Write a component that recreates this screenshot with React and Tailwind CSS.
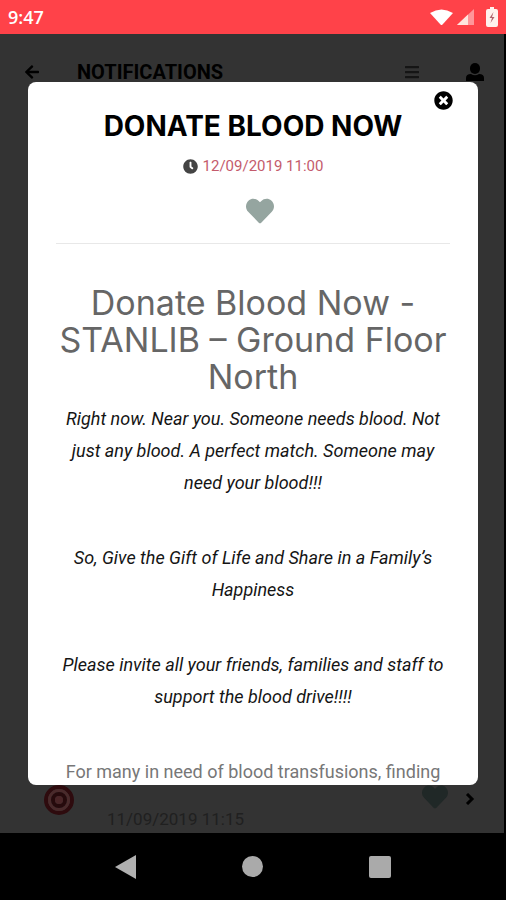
import { FaArrowLeft, FaBars, FaClock, FaHeart, FaTimesCircle } from "react-icons/fa";

const paragraphs = [
  "Right now. Near you. Someone needs blood. Not just any blood. A perfect match. Someone may need your blood!!!",
  "So, Give the Gift of Life and Share in a Family’s Happiness",
  "Please invite all your friends, families and staff to support the blood drive!!!!",
];

function StatusBar() {
  return (
    <div className="flex h-[34px] items-center justify-between bg-[#ff4249] px-2 text-white">
      <span className="text-lg font-semibold font-['Open_Sans',sans-serif]">9:47</span>
      <div className="flex items-center gap-1">
        <svg className="h-4 w-[23px]" viewBox="0 0 23 16" fill="currentColor">
          <path d="M0 4Q11.500-3 23 4L12.500 15.500Q11.500 16.500 10.500 15.500Z" />
        </svg>
        <svg className="h-4 w-[17px]" viewBox="0 0 17 16">
          <path d="M17 0V16H0Z" fill="#ff969a" />
          <path d="M11 5.600V16H0Z" fill="#ffe6df" />
        </svg>
        <svg className="ml-2 h-5 w-3" viewBox="0 0 12 20">
          <path d="M4 0H8V2H10Q12 2 12 4V18Q12 20 10 20H2Q0 20 0 18V4Q0 2 2 2H4Z" fill="#fff1ee" />
          <path d="M7.500 5L3.500 11H6L4.500 16L8.500 10H6Z" fill="#b0626c" />
        </svg>
      </div>
    </div>
  );
}

function NotificationsPage() {
  return (
    <div className="flex flex-1 flex-col border-r-2 border-black bg-[#333333] text-black">
      <header className="flex h-[75px] items-center pr-5 pl-6">
        <button aria-label="Back">
          <FaArrowLeft className="size-4" />
        </button>
        <h1 className="ml-[37px] flex-1 text-xl font-bold">NOTIFICATIONS</h1>
        <button aria-label="Menu">
          <FaBars className="size-4 text-[#151515]" />
        </button>
        <button aria-label="Profile" className="ml-[46px]">
          <svg className="size-[18px]" viewBox="0 0 18 18" fill="currentColor">
            <rect x="4" y="0" width="10" height="11" rx="5" />
            <path d="M0 18V15Q0 11 5 11Q9 13.500 13 11Q18 11 18 15V18Z" />
          </svg>
        </button>
      </header>
      <div className="mt-auto flex items-start pr-7 pl-[43px]">
        <svg className="mt-[3px] size-8" viewBox="0 0 32 32" fill="none">
          <circle cx="16" cy="16" r="13" stroke="#2e0b0e" strokeWidth="4" />
          <circle cx="16" cy="16" r="9.500" stroke="#4a2a2b" strokeWidth="3" />
          <circle cx="16" cy="16" r="6" stroke="#260a0c" strokeWidth="4" />
          <circle cx="16" cy="16" r="4" fill="#4a2527" />
        </svg>
        <p className="mt-6 ml-8 flex-1 text-[17px] leading-7 text-[#202020]">11/09/2019 11:15</p>
        <FaHeart className="mt-[3px] size-[26px] text-[#202827]" />
        <svg className="mt-3 ml-4 size-3" viewBox="0 0 12 12" fill="none" stroke="currentColor" strokeWidth="3">
          <path d="M3 1L8 6L3 11" />
        </svg>
      </div>
    </div>
  );
}

function NotificationDialog() {
  return (
    <div className="absolute inset-0 flex px-7 py-12">
      <div role="dialog" aria-labelledby="dialog-title" className="flex-1 overflow-hidden rounded-lg bg-white text-center">
        <div className="flex h-7 items-end justify-end pr-[25px]">
          <button aria-label="Close">
            <FaTimesCircle className="size-[19px] text-black" />
          </button>
        </div>
        <h2 id="dialog-title" className="text-[28px] leading-8 font-bold text-black font-['Inter',sans-serif]">
          DONATE BLOOD NOW
        </h2>
        <div className="mt-3 flex items-center justify-center gap-[5px] leading-6">
          <FaClock className="size-[15px] text-[#444444]" />
          <time className="text-[15px] text-[#c45b6c]">12/09/2019 11:00</time>
        </div>
        <button aria-label="Like" className="mt-[19px] block w-full pl-[14px]">
          <FaHeart className="mx-auto size-7 text-[#95a5a0]" />
        </button>
        <hr className="mx-7 mt-[18px] border-[#e8e8e8]" />
        <h3 className="mt-10 text-[34px] leading-[37px] text-[#666666] font-['Inter',sans-serif]">
          Donate Blood Now -
          <br />
          STANLIB – Ground Floor
          <br />
          North
        </h3>
        <div className="mt-2 flex flex-col gap-[43px] px-7 text-lg leading-8">
          {paragraphs.map((text) => (
            <p key={text} className="text-[#151515] italic">
              {text}
            </p>
          ))}
          <p className="text-[#777777]">For many in need of blood transfusions, finding</p>
        </div>
      </div>
    </div>
  );
}

function NavigationBar() {
  return (
    <nav className="flex h-[67px] items-center justify-center gap-[106px] bg-black">
      <button aria-label="Back">
        <svg className="h-6 w-[21px]" viewBox="0 0 21 24" fill="#b0b0b0">
          <path d="M21 0V24L0 12Z" />
        </svg>
      </button>
      <button aria-label="Home" className="size-[21px] rounded-full bg-[#aaaaaa]" />
      <button aria-label="Recent apps" className="size-[22px] rounded-xs bg-[#aaaaaa]" />
    </nav>
  );
}

export default function App() {
  return (
    <div className="flex min-h-screen flex-col bg-black font-['Roboto',sans-serif]">
      <StatusBar />
      <main className="relative flex flex-1 flex-col">
        <NotificationsPage />
        <NotificationDialog />
      </main>
      <NavigationBar />
    </div>
  );
}
